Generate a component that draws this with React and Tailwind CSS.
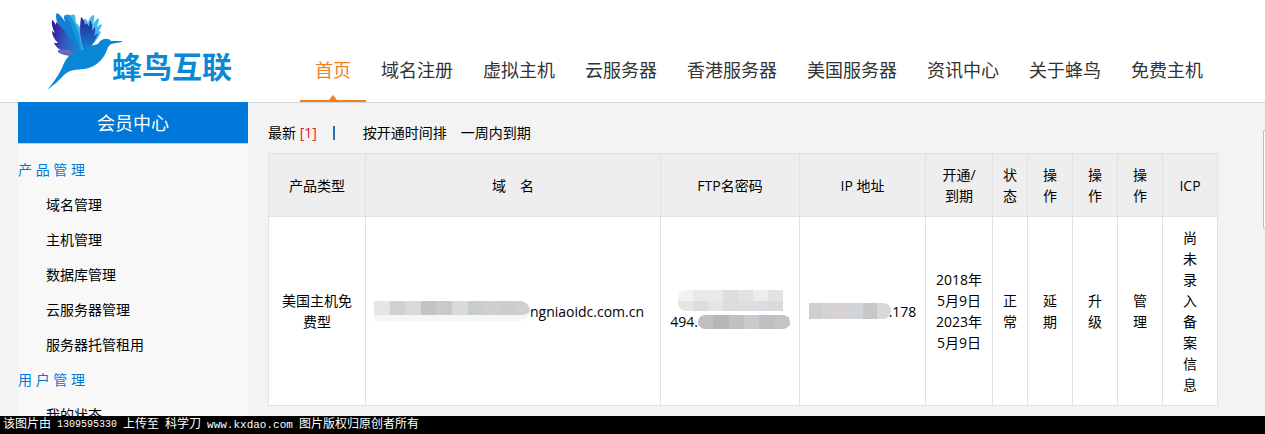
import React from 'react'

const navItems = ['首页', '域名注册', '虚拟主机', '云服务器', '香港服务器', '美国服务器', '资讯中心', '关于蜂鸟', '免费主机']

const menuGroups = [
  { title: '产 品 管 理', items: ['域名管理', '主机管理', '数据库管理', '云服务器管理', '服务器托管租用'] },
  { title: '用 户 管 理', items: ['我的状态'] },
]

const columns = [
  { label: '产品类型', col: 'w-[97px]', cell: 'px-2.5' },
  { label: '域　名', col: '', cell: 'px-2' },
  { label: 'FTP名密码', col: 'w-[139px]', cell: 'px-2' },
  { label: 'IP 地址', col: 'w-[126px]', cell: 'px-2' },
  { label: '开通/\n到期', col: 'w-[67px]', cell: 'px-2' },
  { label: '状态', col: 'w-[35px]', cell: 'px-2' },
  { label: '操作', col: 'w-[45px]', cell: 'px-3' },
  { label: '操作', col: 'w-[45px]', cell: 'px-3' },
  { label: '操作', col: 'w-[45px]', cell: 'px-3' },
  { label: 'ICP', col: 'w-[55px]', cell: 'px-4' },
]

const domainTiles = ['bg-[#e5e5e3]', 'bg-[#d0d0ce]', 'bg-[#d9d9d7]', 'bg-[#c3c3c3]', 'bg-[#c9c9c9]', 'bg-[#d9dbda]', 'bg-[#c8cccb]', 'bg-[#d1cfce]', 'bg-[#c9cdcf]', 'bg-[#cfcfcd]']
const userTiles = ['bg-[#f2f2f2]', 'bg-[#e9e9e9]', 'bg-[#e9e9e7]', 'bg-[#dddddf]', 'bg-[#e2e2e2]', 'bg-[#ededed]', 'bg-[#e2e2e2]']
const userTilesLow = ['bg-[#e4e4e4]', 'bg-[#dcdcda]', 'bg-[#e4e4e2]', 'bg-[#dcdcde]', 'bg-[#dedee0]', 'bg-[#dddde1]', 'bg-[#dadadc]']
const passTiles = ['bg-[#bfbfbf]', 'bg-[#b8b6b5]', 'bg-[#c3c1c0]', 'bg-[#c9cacd]', 'bg-[#bfc0c2]', 'bg-[#c3c4c6]']
const ipTiles = ['bg-[#cfcfcd]', 'bg-[#d2d4d4]', 'bg-[#d6d3d2]', 'bg-[#d0d5d9]', 'bg-[#cac8c7]', 'bg-[#d8d8d8]']

function Mosaic({ rows, className }) {
  return (
    <span aria-hidden="true" className={`z-10 flex shrink-0 flex-col overflow-hidden ${className}`}>
      {rows.map((tiles, r) => (
        <span key={r} className="flex flex-1">
          {tiles.map((tile, i) => (
            <span key={i} className={`flex-1 ${tile}`} />
          ))}
        </span>
      ))}
    </span>
  )
}

function Logo() {
  return (
    <a href="#" className="flex h-[102px] w-[282px] shrink-0 pl-[46px]">
      <svg viewBox="46 0 66 102" className="h-[102px] w-[66px] shrink-0 overflow-visible">
        <defs>
          <linearGradient id="wingLeft" x1="0" y1="0.3" x2="1" y2="0.6">
            <stop offset="0" stopColor="#35189c" />
            <stop offset="0.45" stopColor="#3556b8" />
            <stop offset="1" stopColor="#0f8bd8" />
          </linearGradient>
          <linearGradient id="wingRight" x1="0" y1="0" x2="0" y2="1">
            <stop offset="0" stopColor="#2c1c92" />
            <stop offset="1" stopColor="#1287d6" />
          </linearGradient>
        </defs>
        <path d="M74 50 L67 18 Q71 13 75 15 L76 23 Q80 25 82 33 Q85 38 83 50 Z" fill="#3bb9ee" />
        <path d="M75 52 L64 18 Q65 13 70 15 L75 24 L79 34 L82 50 Z" fill="#1597de" />
        <path d="M73 53 L57 22 Q55 15 57 13 Q61 15 65 22 L64 15 Q69 19 72 27 L80 49 Z" fill="#1280d2" />
        <path d="M52 20 Q53 20 56 25 L56 22 Q62 27 68 36 L81 50 L74 56 Q63 56 58 52 L63 51 Q56 48 54 43 L58 43 Q52 37 52 31 L55 33 Q51 26 52 20 Z" fill="url(#wingLeft)" />
        <path d="M58 50 Q64 49 70 50 L76 54 Q66 57 58 52 Z" fill="#7468bd" />
        <path d="M85 49 L82 23 Q84 17 87 20 L88 23 Q90 15 94 15 Q95 17 93 24 Q97 18 99 18 Q99 22 97 27 Q101 23 102 25 L99 31 L101 32 Q99 38 90 47 Z" fill="#48bbee" />
        <path d="M84 51 Q78 35 81 17 Q84 19 85 25 Q87 21 89 27 L90 20 Q93 25 92 31 L95 27 Q96 31 94 36 L98 33 Q96 40 90 48 Z" fill="url(#wingRight)" />
        <path d="M47 90 Q56 80 62 68 Q65 59 71 54 Q78 51 84 49 Q92 45 98 44 Q100 40 104 39 Q109 38 111 41 L122 41 V42 L111 44 Q108 46 107 50 Q104 58 98 63 Q92 68 84 69 L74 70 Q68 71 64 75 Q57 83 47 90 Z" fill="#0a88d6" />
      </svg>
      <span className="pt-[46px] text-3xl leading-[42px] font-bold whitespace-nowrap text-[#0a88d6]">蜂鸟互联</span>
    </a>
  )
}

function Header() {
  return (
    <header className="flex shrink-0 items-end border-b border-[#d5d5d5] bg-white">
      <Logo />
      <nav className="flex pl-[18px]">
        {navItems.map((item, i) => (
          <a
            key={item}
            href="#"
            className={`relative flex h-16 items-center justify-center border-b-2 px-[15px] pt-0.5 text-lg whitespace-nowrap ${i === 0 ? 'border-[#f08020] text-[#f08020]' : 'border-transparent text-[#333]'}`}
          >
            {item}
            {i === 0 && (
              <svg viewBox="0 0 8 5" className="absolute bottom-0 left-1/2 h-[5px] w-2 -translate-x-1/2" fill="#f08020">
                <path d="M4 0 L8 5 H0 Z" />
              </svg>
            )}
          </a>
        ))}
      </nav>
    </header>
  )
}

function Sidebar() {
  return (
    <aside className="-mt-px w-[230px] shrink-0 bg-[#f8f8f8]">
      <h2 className="flex h-[42px] items-center justify-center border-b border-[#ccc] bg-[#0078d9] text-lg text-white">会员中心</h2>
      <div className="pt-2">
        {menuGroups.map((group) => (
          <section key={group.title}>
            <h3 className="text-sm leading-[35px] text-[#0078d9]">{group.title}</h3>
            <ul>
              {group.items.map((item) => (
                <li key={item} className="pl-7 text-sm leading-[35px]">
                  <a href="#">{item}</a>
                </li>
              ))}
            </ul>
          </section>
        ))}
      </div>
    </aside>
  )
}

function ProductTable() {
  const cells = [
    '美国主机免费型',
    <span className="flex items-center justify-end pr-2">
      <Mosaic rows={[domainTiles]} className="h-5 w-[156px] rounded-r-full border-b-6 border-[#f6f6f6]" />
      ngniaoidc.com.cn
    </span>,
    <span className="flex flex-col items-center">
      <Mosaic rows={[userTiles, userTilesLow]} className="h-[21px] w-[105px] rounded-l-lg" />
      <span className="flex items-center">
        494.
        <Mosaic rows={[passTiles]} className="h-3.5 w-[92px] rounded-full" />
        <span className="-ml-2">5</span>
      </span>
    </span>,
    <span className="flex items-center justify-center">
      <Mosaic rows={[ipTiles]} className="h-4 w-[82px] rounded-r-full" />
      <span className="-ml-0.5">.178</span>
    </span>,
    <>2018年5月9日<br />2023年5月9日</>,
    '正常',
    <a href="#">延期</a>,
    <a href="#">升级</a>,
    <a href="#">管理</a>,
    '尚未录入备案信息',
  ]

  return (
    <table className="w-full table-fixed border-collapse text-center text-sm leading-[21px]">
      <colgroup>
        {columns.map((c, i) => <col key={i} className={c.col} />)}
      </colgroup>
      <thead>
        <tr className="bg-[#eee]">
          {columns.map((c, i) => (
            <th key={i} className={`border border-[#e1e1e1] py-2.5 font-normal whitespace-pre-line ${c.cell}`}>{c.label}</th>
          ))}
        </tr>
      </thead>
      <tbody>
        <tr className="bg-white">
          {cells.map((cell, i) => (
            <td key={i} className={`border border-[#e1e1e1] py-2.5 ${columns[i].cell}`}>{cell}</td>
          ))}
        </tr>
      </tbody>
    </table>
  )
}

function App() {
  return (
    <div className="flex h-screen flex-col bg-[#f3f3f3] font-['Open_Sans','Noto_Sans_CJK_SC',sans-serif] text-black">
      <div className="flex min-h-0 flex-1 flex-col overflow-hidden">
        <Header />
        <div className="flex min-h-0 flex-1 pl-[18px]">
          <Sidebar />
          <main className="min-w-0 flex-1 pl-5">
            <div className="flex h-[50px] items-center pt-2.5 text-sm">
              <a href="#">最新 <span className="text-[#f01030]">[1]</span></a>
              <span className="ml-4 h-3.5 w-0.5 bg-[#2a70b0]" />
              <a href="#" className="ml-7">按开通时间排</a>
              <a href="#" className="ml-3.5">一周内到期</a>
            </div>
            <ProductTable />
          </main>
          <div className="flex w-[47px] shrink-0 justify-end pt-[27px]">
            <span className="h-[99px] w-0.5 rounded-l border border-r-0 border-[#bbb] bg-white" />
          </div>
        </div>
      </div>
      <footer className="flex h-[18px] shrink-0 items-center gap-1.5 bg-black pl-[3px] font-['Liberation_Mono','Noto_Sans_CJK_SC',monospace] text-xs whitespace-nowrap text-white">
        <span>该图片由</span>
        <span className="text-[10px]">1309595330</span>
        <span>上传至</span>
        <span>科学刀</span>
        <span className="text-[11px]">www.kxdao.com</span>
        <span>图片版权归原创者所有</span>
      </footer>
    </div>
  )
}

export default App
